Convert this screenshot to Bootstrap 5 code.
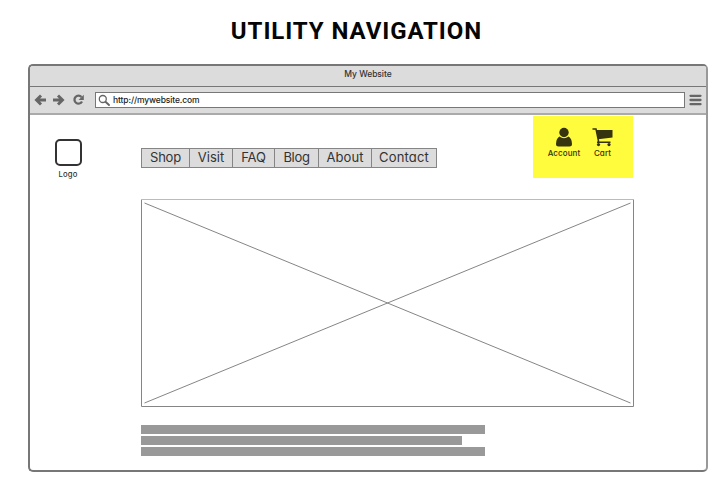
<!DOCTYPE html>
<html lang="en">
<head>
<meta charset="utf-8">
<meta name="viewport" content="width=device-width, initial-scale=1">
<title>Utility Navigation</title>
<link href="https://cdn.jsdelivr.net/npm/bootstrap@5.3.0/dist/css/bootstrap.min.css" rel="stylesheet">
<style>
body{font-family:Inter,"Liberation Sans",sans-serif;font-feature-settings:"cv11";color:#333;height:482px;overflow:hidden}
svg{display:block}
.page-title{font:700 24px/30px Roboto,sans-serif;letter-spacing:.92px;color:#050505;padding:16px 0 0 1px;height:64px;margin-left:-15px}
.browser{width:680px;height:408px;margin-left:28px;border:2px solid #777;border-right-color:#999;border-radius:5px}
.titlebar{height:21px;background:#dcdcdc;border-bottom:1px solid #777;font-size:8.5px;font-weight:500;line-height:16px;letter-spacing:-.05px}
.toolbar{height:28px;background:#dcdcdc;border-bottom:2px solid #aaa;padding-left:4px}
.address{width:590px;height:16px;margin-left:10px;border:1px solid #777;font-size:8.5px;font-weight:500;letter-spacing:-.12px;color:#222}
.address svg{margin:0 3px 0 2px}
.menu-bars{margin-left:4px}
.page-head{height:83px;padding-left:23px}
.logo-col{width:30px;margin-top:24px;font-size:7.7px;font-weight:500;line-height:10px;letter-spacing:.2px}
.logo-box{width:27px;height:27px;border:2px solid #333;border-radius:5px;margin-bottom:4px}
.main-nav{margin:33px 0 0 58px;height:20px;border:1px solid #858585;background:#dcdcdc;flex-wrap:nowrap}
.main-nav .nav-link{padding:0;height:18px;font-size:13px;line-height:17px;color:#333;text-align:center;border-right:1px solid #858585;white-space:nowrap}
.main-nav .nav-item:last-child .nav-link{border-right:0}
.w-shop{width:48px;letter-spacing:-.25px}.w-visit{width:43px;letter-spacing:0}.w-faq{width:42px;letter-spacing:-.1px}.w-blog{width:44px;letter-spacing:-.3px}.w-about{width:53px;letter-spacing:.05px}.w-contact{width:64px;letter-spacing:.15px}
.utility{width:100px;height:62px;margin:1px 0 0 96px;background:#fffb3d;color:#36330f;font-size:8px;font-weight:500;line-height:11px;letter-spacing:.1px;padding:11px 0 0 14px}
.utility div:first-child{width:34px}
.utility div:last-child{width:27px;margin-left:8px}
.utility svg{margin-bottom:1px}
.hero{margin-left:111px}
.bars{margin:18px 0 0 111px;gap:2px}
.copy-line{height:9px;width:344px;background:#999}
.copy-short{width:321px}
</style>
<script src="https://cdn.jsdelivr.net/npm/bootstrap@5.3.0/dist/js/bootstrap.bundle.min.js"></script>
</head>
<body class="bg-white">
<h1 class="page-title text-center mb-0">UTILITY NAVIGATION</h1>
<main class="browser overflow-hidden bg-white">
  <div class="titlebar text-center">My Website</div>
  <div class="toolbar d-flex align-items-center">
    <svg width="51" height="14" fill="none" stroke="#666" stroke-width="2.9"><path d="M7 2.500 2.500 7 7 11.500M3 7h9M24 2.500 28.500 7 24 11.500M28 7h-9"/><path d="M47.500 4A4 4 0 1 0 48 8.500" stroke-width="2.300"/><path d="M49.800 1.800v5.200h-5.200z" fill="#666" stroke="none"/></svg>
    <div class="address bg-white d-flex align-items-center">
      <svg width="12" height="13" fill="none" stroke="#666"><circle cx="4.800" cy="5" r="3.500" stroke-width="1.300"/><path d="m7.500 7.800 3.500 3.200" stroke-width="1.900" stroke-linecap="round"/></svg>
      <span>http://mywebsite.com</span>
    </div>
    <svg class="menu-bars" width="13" height="12" stroke="#666" stroke-width="2.300" stroke-linecap="round"><path d="M1.500 1.800h10M1.500 6h10M1.500 10.200h10"/></svg>
  </div>
  <header class="page-head d-flex align-items-start">
    <div class="logo-col d-flex flex-column align-items-center"><div class="logo-box"></div>Logo</div>
    <ul class="nav main-nav">
      <li class="nav-item"><a class="nav-link w-shop" href="#">Shop</a></li>
      <li class="nav-item"><a class="nav-link w-visit" href="#">Visit</a></li>
      <li class="nav-item"><a class="nav-link w-faq" href="#">FAQ</a></li>
      <li class="nav-item"><a class="nav-link w-blog" href="#">Blog</a></li>
      <li class="nav-item"><a class="nav-link w-about" href="#">About</a></li>
      <li class="nav-item"><a class="nav-link w-contact" href="#">Contact</a></li>
    </ul>
    <div class="utility d-flex">
      <div class="d-flex flex-column align-items-center">
        <svg width="18" height="20" fill="#36330f"><circle cx="9" cy="5.500" r="4.700"/><path d="M4.500 9.500Q9 13 13.500 9.500 17 11.500 17 17q0 2.500-2.500 2.500h-11Q1 19.500 1 17q0-5.500 3.500-7.500z"/></svg>Account
      </div>
      <div class="d-flex flex-column align-items-center">
        <svg width="21" height="20" fill="#36330f"><path d="M.5 2h3.500l2.700 13M5 15.200h13.500" fill="none" stroke="#36330f" stroke-width="1.500"/><path d="M4.300 3H20.500V10.500L6.200 12.300z"/><circle cx="6.500" cy="17.600" r="1.600"/><circle cx="17" cy="17.600" r="1.600"/></svg>Cart
      </div>
    </div>
  </header>
  <svg class="hero" width="493" height="209" fill="none" stroke="#858585"><path d="M.5 1v207.500h492V1"/><path d="M0 1.500h493" stroke="#bbb"/><path d="m3.500 5 486 200m0-200-486 200"/></svg>
  <div class="bars d-flex flex-column"><div class="copy-line"></div><div class="copy-line copy-short"></div><div class="copy-line"></div></div>
</main>
</body>
</html>
